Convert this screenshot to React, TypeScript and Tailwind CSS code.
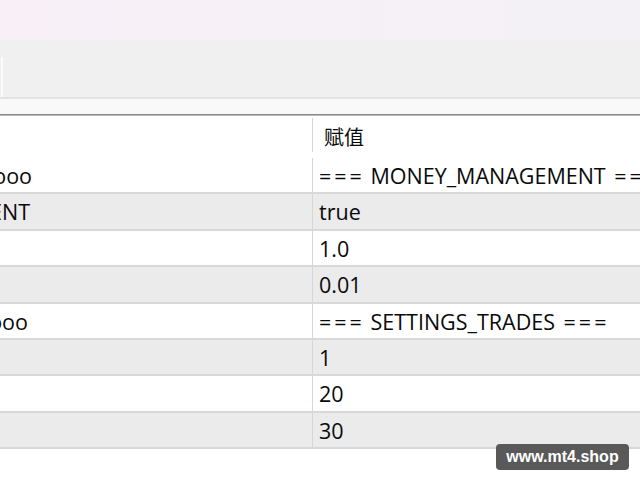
import React from 'react';

interface ParamRow {
  name: string;
  value: string;
}

const rows: ParamRow[] = [
  { name: 'oooooooooooo', value: '=== MONEY_MANAGEMENT ===' },
  { name: 'USE_MONEY_MANAGEMENT', value: 'true' },
  { name: '', value: '1.0' },
  { name: '', value: '0.01' },
  { name: 'ooooooooooo', value: '=== SETTINGS_TRADES ===' },
  { name: '', value: '1' },
  { name: '', value: '20' },
  { name: '', value: '30' },
];

const nameEnds = ['w-[32px]', 'w-[30px]', 'w-[32px]', 'w-[32px]', 'w-[28px]', 'w-[32px]', 'w-[32px]', 'w-[32px]'];

const font = { fontFamily: '"Open Sans", "Noto Sans CJK SC", sans-serif' };

// the "===" separators are drawn wider in the original font
const Value: React.FC<{ text: string }> = ({ text }) => {
  const m = text.match(/^(===) (.*?) (===)$/);
  if (!m) return <span>{text}</span>;
  return (
    <span className="whitespace-pre">
      <span className="tracking-[3px]">{m[1]}</span>
      {' ' + m[2] + ' '}
      <span className="tracking-[3px] ml-[3px]">{m[3]}</span>
    </span>
  );
};

const App: React.FC = () => {
  return (
    <div className="relative w-[640px] h-[480px] overflow-hidden bg-white text-[#0a0a0a]" style={font}>
      {/* window title strip */}
      <div className="h-[40px] bg-gradient-to-r from-[#f8eff7] to-[#f3f1f6]" />

      {/* tab area */}
      <div className="h-[57px] bg-[#f0f0f0] pt-[17px]">
        <div className="h-full ml-[1px] w-[4px] border-l-2 border-[#fbfbfb]" />
      </div>
      <div className="h-[2px] bg-[#e3e3e3]" />
      <div className="h-[15px] bg-[#f9f9f9]" />
      <div className="h-[1px] bg-[#8c8c8c]" />
      <div className="h-[1px] bg-[#b9b9b9]" />

      {/* header */}
      <div className="flex h-[42px]">
        <div className="w-[312px]" />
        <div className="flex-1 pt-[2px] pb-[6px]">
          <div className="h-full border-l-[1.5px] border-[#d6d6d6] flex items-center pt-[5px] pl-[11px] text-[20px]">
            赋值
          </div>
        </div>
      </div>

      {/* parameter rows */}
      <div className="flex flex-col">
        {rows.map((row, i) => (
          <div
            key={i}
            className={`flex h-[36.4px] box-border border-b-2 border-[#d8d8d8] ${i % 2 === 1 ? 'bg-[#ebebeb]' : 'bg-white'}`}
          >
            <div className="w-[312px] flex items-center pt-[2px] overflow-hidden">
              <div className={`${nameEnds[i]} flex justify-end whitespace-nowrap text-[21.5px]`}>{row.name}</div>
            </div>
            <div className="flex-1 flex items-center pt-[2px] border-l-[1.5px] border-[#d6d6d6] pl-[6px] whitespace-nowrap overflow-hidden text-[21.5px]">
              <Value text={row.value} />
            </div>
          </div>
        ))}
      </div>

      {/* watermark */}
      <div
        className="absolute left-[496px] top-[444px] w-[133px] h-[26px] rounded-[4px] bg-[#595959] flex items-center justify-center text-white font-bold text-[16px]"
        style={{ fontFamily: '"Liberation Sans", Arial, sans-serif' }}
      >
        www.mt4.shop
      </div>
    </div>
  );
};

export default App;
